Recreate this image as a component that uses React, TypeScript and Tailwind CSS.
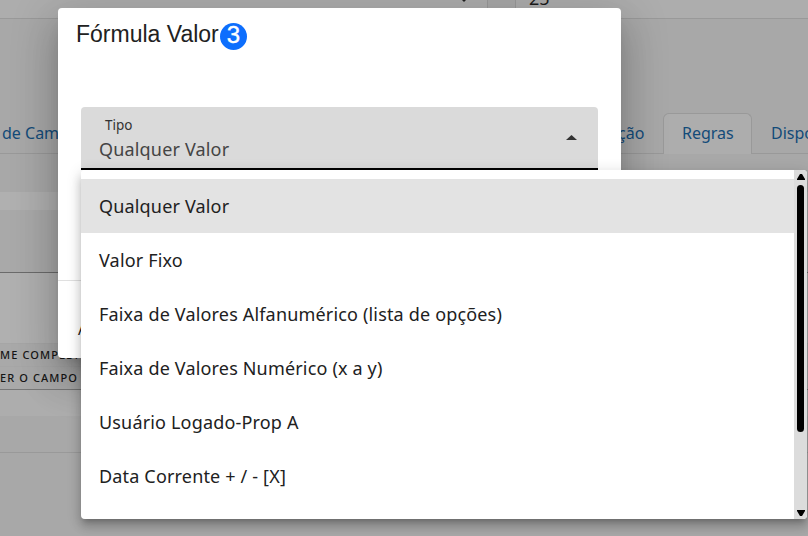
import React from "react";

const options = [
  "Qualquer Valor",
  "Valor Fixo",
  "Faixa de Valores Alfanumérico (lista de opções)",
  "Faixa de Valores Numérico (x a y)",
  "Usuário Logado-Prop A",
  "Data Corrente + / - [X]",
];

function Backdrop() {
  return (
    <div className="flex h-[536px] flex-col bg-[#a8a8a8]">
      <div className="flex h-[19px] shrink-0 justify-between">
        <div className="flex w-[488px] justify-end border-r border-b border-[#999] bg-[#adadad] pr-[18px]">
          <svg className="-mt-[4px] h-[6px] w-[10px]" viewBox="0 0 10 6">
            <path d="M0 1l5 5 5-5z" fill="#222" />
          </svg>
        </div>
        <div className="w-[293px] border-b border-l border-[#999] bg-[#adadad] pl-[13px]">
          <div className="-mt-[14px] text-[18px] leading-[24px] text-[#1b1b1b]">25</div>
        </div>
      </div>
      <div className="mt-[94px] flex h-[41px] shrink-0 text-[16px] leading-[40px] text-[#134b79]">
        <div className="w-[618px] border-b border-[#999] pl-[2px]">de Campos</div>
        <div className="w-[45px] border-b border-[#999]">ção</div>
        <div className="w-[89px] rounded-t-[6px] border border-b-0 border-[#999] bg-[#adadad] pl-[18px] leading-[39px]">Regras</div>
        <div className="w-[56px] overflow-hidden border-b border-[#999] pl-[19px] whitespace-nowrap">Disposição</div>
      </div>
      <div className="h-[38px] shrink-0" />
      <div className="h-[18px] shrink-0 bg-[#b0b0b0]" />
      <div className="h-[63px] shrink-0 border-b border-[#6b6b6b] bg-[#a9a9a9]" />
      <div className="h-[70px] shrink-0 bg-[#b0b0b0]" />
      <div className="flex h-[47px] shrink-0 flex-col border-b border-[#777] bg-[#a9a9a9] text-[11px] font-medium tracking-[1.1px] text-[#161616]">
        <div className="h-[23px] border-t border-[#a6a6a6] leading-[21px]">ME COMPLETO</div>
        <div className="h-[23px] border-t border-[#a6a6a6] leading-[21px]">ER O CAMPO</div>
      </div>
      <div className="h-[26px] shrink-0 bg-[#adadad]" />
      <div className="h-[37px] shrink-0 border-b border-[#999]" />
    </div>
  );
}

function Dialog() {
  return (
    <div className="absolute top-[8px] left-[58px] flex h-[350px] w-[563px] flex-col rounded-[4px] bg-white shadow-[0_11px_15px_-7px_rgba(0,0,0,0.2),0_24px_38px_3px_rgba(0,0,0,0.14),0_9px_46px_8px_rgba(0,0,0,0.12)]">
      <div className="flex h-[99px] pt-[10px] pl-[18px] font-['Liberation_Sans',Arial,sans-serif] text-[23px] leading-[32px] text-[#212121]">
        <h2 className="w-[144px] whitespace-nowrap">Fórmula Valor</h2>
        <span className="mt-[5px] h-[27px] w-[27px] rounded-full bg-[#0d6efd] text-center text-[24px] leading-[23px] text-white [-webkit-text-stroke:0.4px_white]">3</span>
      </div>
      <div className="mx-[23px] flex h-[63px] items-center justify-between rounded-t-[4px] border-b-2 border-black bg-[#dadada] pr-[21px] pl-[18px]">
        <div className="pt-[3px]">
          <div className="pl-[6px] text-[13.5px] leading-[18px] text-[#333]">Tipo</div>
          <div className="pt-px text-[18px] leading-[28px] tracking-[0.17px] text-[#444]">Qualquer Valor</div>
        </div>
        <svg className="h-[5px] w-[11px]" viewBox="0 0 11 5">
          <path d="M0 5l5.5-5L11 5z" fill="#333" />
        </svg>
      </div>
      <div className="mt-[110px] flex-1 border-t border-[#e0e0e0] pt-[36px] pl-[20px] text-[16px] leading-[24px] text-[#222]">Aplicar</div>
    </div>
  );
}

function Menu() {
  return (
    <div className="absolute top-[170px] left-[81px] flex h-[349px] w-[726px] overflow-hidden rounded-[4px] bg-white">
      <ul className="flex-1 pt-[9px]">
        {options.map((o, i) => (
          <li
            key={o}
            className={`flex h-[54px] items-center pl-[18px] text-[18px] leading-[26px] tracking-[0.17px] text-[#212121] ${i === 0 ? "bg-[#e3e3e3]" : ""}`}
          >
            {o}
          </li>
        ))}
      </ul>
      <div className="flex w-[13px] flex-col items-center bg-[#dcdcdc] pt-[4px] pb-[3px]">
        <svg className="h-[6px] w-[8px]" viewBox="0 0 8 6">
          <path d="M3 0h2l3 5v1H0V5z" />
        </svg>
        <div className="mt-[5px] h-[247px] w-[7px] rounded-full bg-black" />
        <svg className="mt-auto h-[6px] w-[8px]" viewBox="0 0 8 6">
          <path d="M0 0h8v1L5 6H3L0 1z" />
        </svg>
      </div>
    </div>
  );
}

export default function App() {
  return (
    <div className="relative h-[536px] w-[808px] overflow-hidden font-['Noto_Sans',sans-serif]">
      <Backdrop />
      <Dialog />
      <div className="absolute top-[170px] left-[81px] h-[349px] w-[726px] rounded-[4px] shadow-[0_5px_5px_-3px_rgba(0,0,0,0.2),0_8px_10px_1px_rgba(0,0,0,0.14),0_3px_14px_2px_rgba(0,0,0,0.12)]" />
      <Menu />
    </div>
  );
}
